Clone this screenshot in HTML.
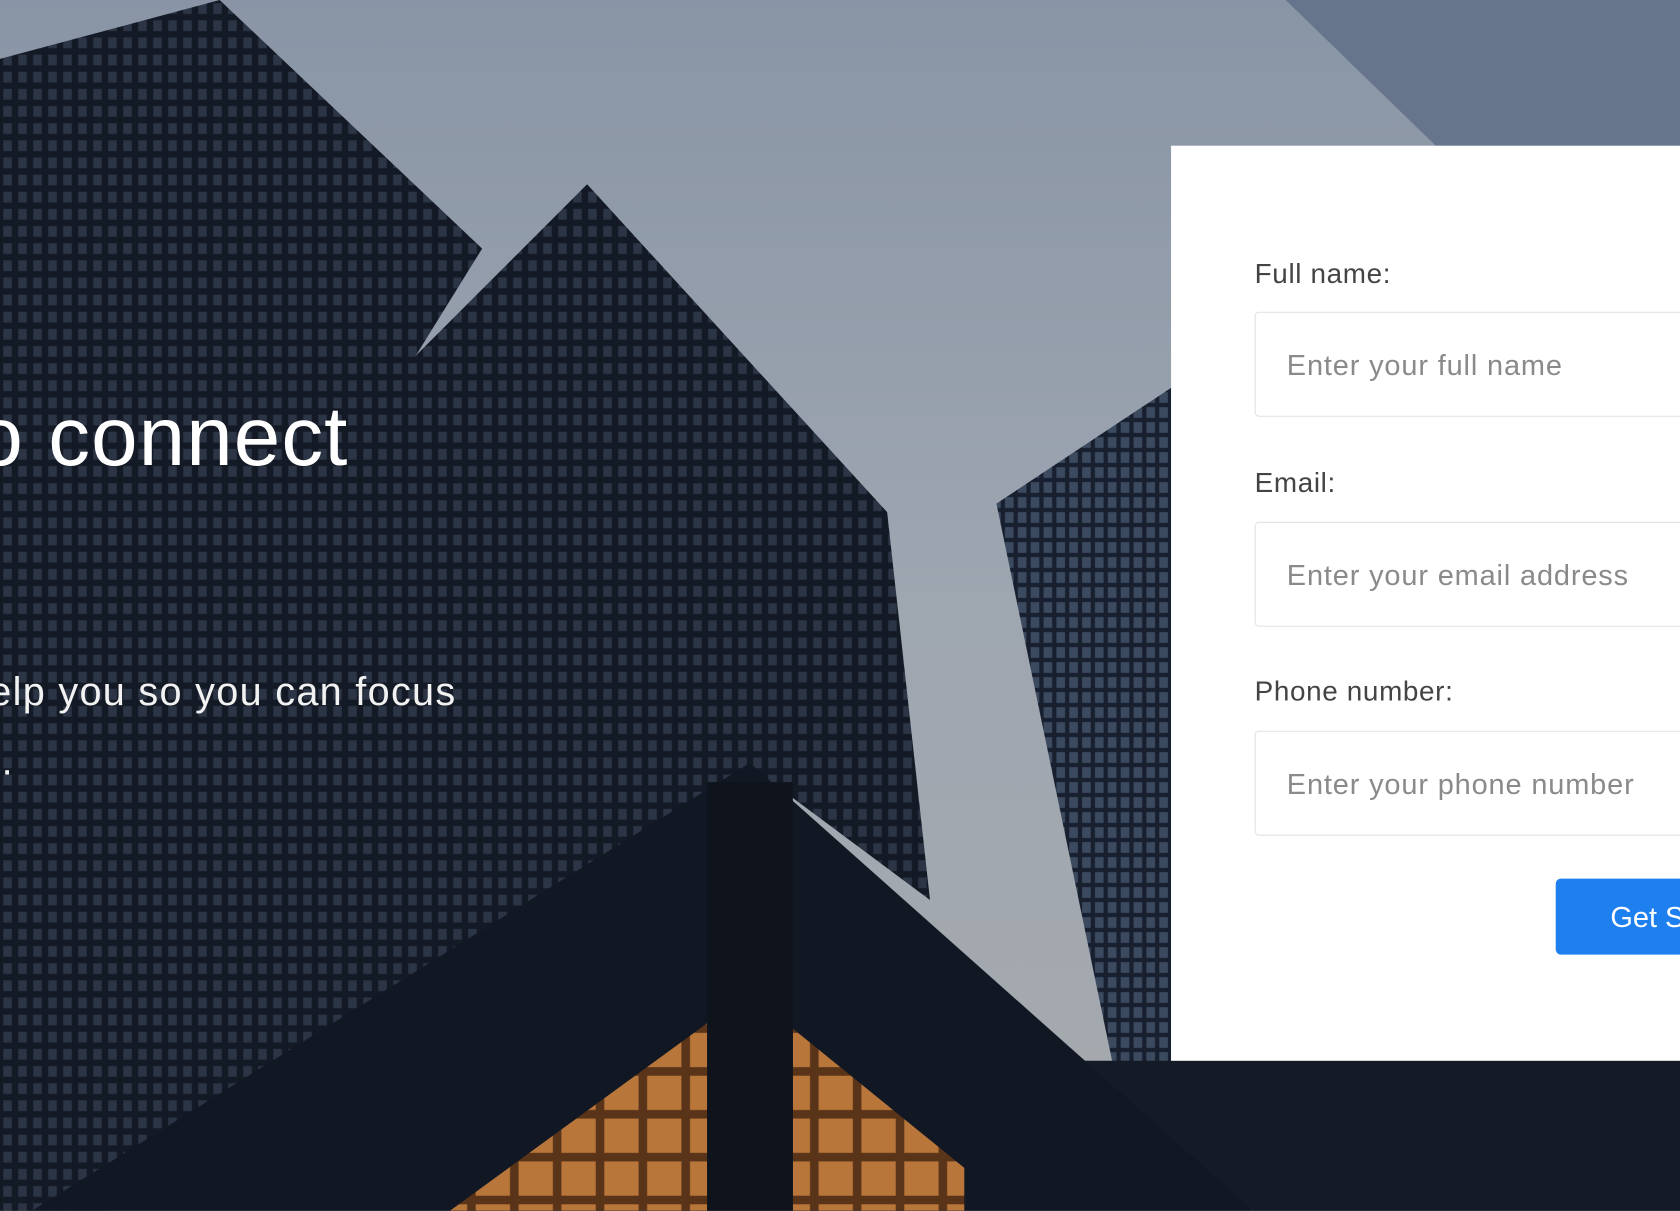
<!DOCTYPE html>
<html><head><meta charset="utf-8">
<style>
html,body{margin:0;padding:0;width:1680px;height:1211px;overflow:hidden;background:#2a3140;}
#wrap{position:absolute;left:0;top:0;width:1568px;height:1130px;transform:scale(1.07143);transform-origin:0 0;font-family:"Liberation Sans",sans-serif;}
svg.bg{position:absolute;left:0;top:0;}
.h1{position:absolute;left:-22px;top:362px;color:#fff;font-size:78px;letter-spacing:1px;}
.p{position:absolute;left:0;color:#f2f2f2;font-size:37px;letter-spacing:1.2px;white-space:nowrap;}
.card{position:absolute;left:1093px;top:136px;width:480px;height:854px;background:#fff;}
.lbl{position:absolute;left:78px;color:#444;font-size:26px;letter-spacing:0.6px;}
.inp{position:absolute;left:78px;width:420px;height:98px;border:1px solid #e2e2e2;border-radius:4px;box-sizing:border-box;color:#8a8a8a;font-size:27px;letter-spacing:0.8px;padding:34px 0 0 29px;white-space:nowrap;}
.btn{position:absolute;left:359px;top:684px;width:140px;height:71px;background:#1e7fef;border-radius:5px;color:#fff;font-size:27px;box-sizing:border-box;padding:21px 0 0 51px;white-space:nowrap;overflow:hidden;}
</style></head><body>
<div id="wrap">
<svg class="bg" width="1568" height="1130" viewBox="0 0 1568 1130">
<defs>
<linearGradient id="sky" x1="0" y1="0" x2="0" y2="1">
<stop offset="0" stop-color="#8995a6"/><stop offset="0.5" stop-color="#9ea6b0"/><stop offset="1" stop-color="#a7aaae"/></linearGradient>
<pattern id="win" width="14" height="16" patternUnits="userSpaceOnUse">
<rect width="14" height="16" fill="#141a25"/><rect x="3" y="3" width="8" height="10" fill="#2c3545"/></pattern>
<pattern id="win2" width="12" height="14" patternUnits="userSpaceOnUse">
<rect width="12" height="14" fill="#182030"/><rect x="2" y="2" width="8" height="10" fill="#3c4a60"/></pattern>
<pattern id="lit" width="40" height="40" patternUnits="userSpaceOnUse">
<rect width="40" height="40" fill="#5a3418"/><rect x="4" y="4" width="32" height="32" fill="#b8763a"/></pattern>
</defs>
<rect width="1568" height="1130" fill="url(#sky)"/>
<polygon points="1200,0 1568,0 1568,136 1340,136" fill="#66758b"/>
<polygon points="930,470 1093,362 1093,1000 1040,1000" fill="url(#win2)"/>
<polygon points="1000,990 1568,990 1568,1130 1170,1130" fill="#151b26"/>
<polygon points="0,55 205,0 450,232 380,345 130,1100 100,1130 0,1130" fill="url(#win)"/>
<polygon points="370,350 548,172 828,478 868,840 700,715 120,1090" fill="url(#win)"/>
<polygon points="30,1130 700,712 1170,1130" fill="#121823"/>
<polygon points="420,1130 660,955 660,1130" fill="url(#lit)"/>
<polygon points="740,960 900,1090 900,1130 740,1130" fill="url(#lit)"/>
<rect x="660" y="730" width="80" height="400" fill="#0f141c"/>
</svg>
<div class="h1">o connect</div>
<div class="p" style="top:625px;left:-10px">elp you so you can focus</div>
<div class="p" style="top:690px;left:-10px">t.</div>
<div class="card">
<div class="lbl" style="top:104px">Full name:</div>
<div class="inp" style="top:155px">Enter your full name</div>
<div class="lbl" style="top:299px">Email:</div>
<div class="inp" style="top:351px">Enter your email address</div>
<div class="lbl" style="top:494px">Phone number:</div>
<div class="inp" style="top:546px">Enter your phone number</div>
<div class="btn">Get Started</div>
</div>
</div>
</body></html>
